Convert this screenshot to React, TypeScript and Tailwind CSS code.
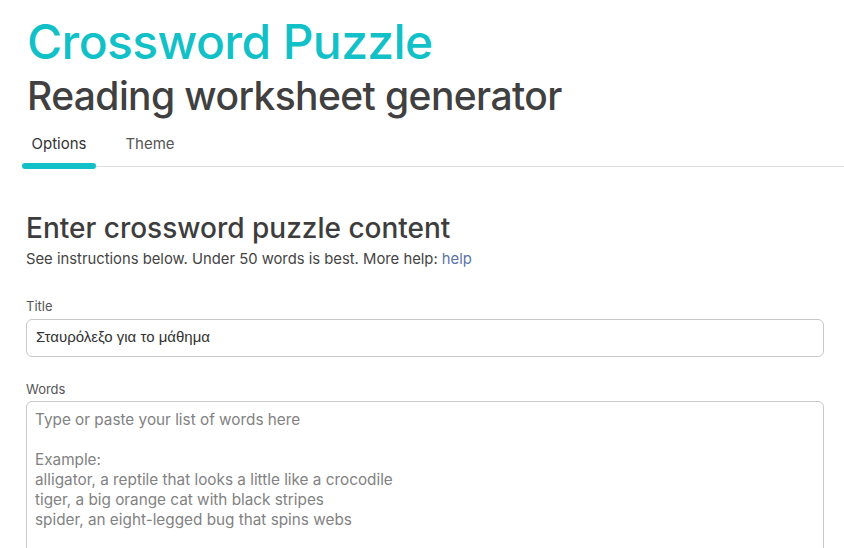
export default function App() {
  return (
    <div className="min-h-screen bg-white font-['Inter',sans-serif] text-[#3d3d3d]">
      <div className="pl-[22px] pt-[12px]">
        {/* Header */}
        <div className="pl-[5px]">
          <h1 className="text-[48px] leading-[60px] font-medium tracking-[-0.6px] text-[#12c1c8]">Crossword Puzzle</h1>
          <h2 className="text-[39px] leading-[48px] font-medium tracking-[-0.6px] text-[#404040]">Reading worksheet generator</h2>
        </div>

        {/* Tabs */}
        <div className="mt-[13px] flex items-end border-b border-[#dcdcdc]">
          <div className="relative w-[74px] pb-[10px] text-center text-[15px] text-[#333]">
            Options
            <span className="absolute left-0 right-0 -bottom-[3px] h-[6px] rounded-full bg-[#12c1c8]" />
          </div>
          <div className="ml-[14px] w-[80px] pb-[10px] text-center text-[15px] text-[#555]">Theme</div>
        </div>

        {/* Content */}
        <div className="pl-[4px] pr-[20px] pt-[43px]">
          <h3 className="text-[28px] leading-[36px] font-medium text-[#3d3d3d]">Enter crossword puzzle content</h3>
          <p className="mt-[3px] text-[14.8px] leading-[20px] text-[#444]">
            See instructions below. Under 50 words is best. More help: <a className="text-[#5b74a8]">help</a>
          </p>

          <label className="mt-[28px] block text-[13px] leading-[18px] text-[#555]">Title</label>
          <div className="mt-[4px] flex h-[38px] items-center rounded-[6px] border border-[#c8c8c8] px-[9px] text-[15px] text-[#333] font-['Liberation_Sans',sans-serif]">
            Σταυρόλεξο για το μάθημα
          </div>

          <label className="mt-[23px] block text-[13px] leading-[18px] text-[#555]">Words</label>
          <div className="mt-[3px] h-[200px] rounded-[6px] border border-[#c8c8c8] px-[8px] pt-[8px] text-[15.3px] leading-[20px] text-[#828282]">
            <div>Type or paste your list of words here</div>
            <div className="h-[20px]" />
            <div>Example:</div>
            <div>alligator, a reptile that looks a little like a crocodile</div>
            <div>tiger, a big orange cat with black stripes</div>
            <div>spider, an eight-legged bug that spins webs</div>
          </div>
        </div>
      </div>
    </div>
  );
}
